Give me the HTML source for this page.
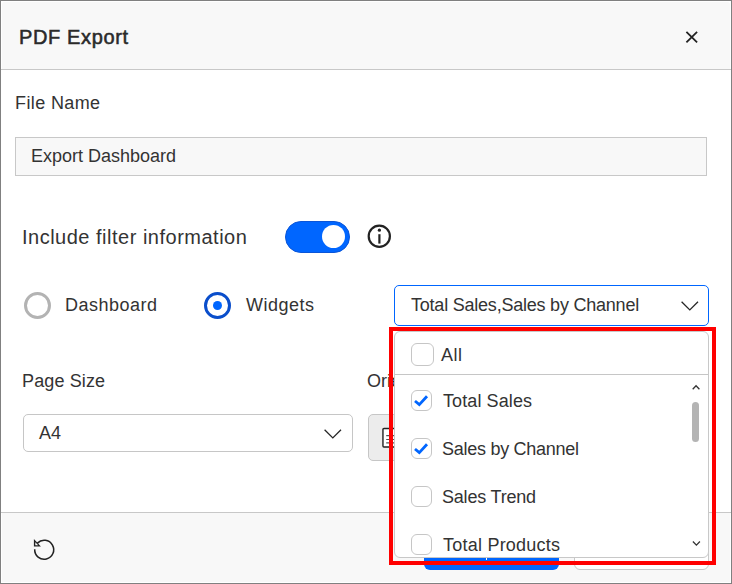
<!DOCTYPE html>
<html><head><meta charset="utf-8">
<style>
*{box-sizing:border-box;margin:0;padding:0}
html,body{width:732px;height:584px;overflow:hidden;background:#fff}
body{position:relative;font-family:"Liberation Sans",sans-serif;color:#333}
.abs{position:absolute}
.t{position:absolute;white-space:nowrap;line-height:1}
#frame{left:0;top:0;width:732px;height:584px;border:1px solid #808080}
#hdr{left:2px;top:2px;width:728px;height:67px;background:#f8f8f8;border-radius:2px 2px 0 0}
#hdrline{left:1px;top:69px;width:730px;height:1px;background:#c8c8c8}
#ftr{left:2px;top:513px;width:728px;height:69px;background:#f8f8f8}
#ftrline{left:1px;top:512px;width:730px;height:1px;background:#c8c8c8}
#title{left:19px;top:27px;font-size:20px;color:#2a2a2a;-webkit-text-stroke:.55px #2a2a2a;letter-spacing:.63px}
#fname{left:15px;top:94px;font-size:18px;letter-spacing:.38px}
#input{left:15px;top:137px;width:692px;height:39px;background:#f8f8f8;border:1px solid #c8c8c8}
#inputtxt{left:31px;top:147px;font-size:18px}
#incl{left:22px;top:227px;font-size:20px;letter-spacing:.5px}
#toggle{left:285px;top:221px;width:65px;height:32px;border-radius:16px;background:#0066ff;border:1px solid #0a55d8}
#knob{left:322px;top:225px;width:23px;height:23px;border-radius:50%;background:#fff}
#r1{left:24px;top:292px;width:27px;height:27px;border-radius:50%;border:3px solid #b3b3b3}
#r2{left:204px;top:292px;width:27px;height:27px;border-radius:50%;border:3px solid #0a4ecb}
#r2dot{left:213px;top:301px;width:9px;height:9px;border-radius:50%;background:#0066ff}
#dash{left:65px;top:296px;font-size:18px;letter-spacing:.5px}
#widg{left:246px;top:296px;font-size:18px;letter-spacing:.5px}
#dd{left:394px;top:285px;width:315px;height:41px;border:1px solid #0066ff;border-radius:5px;background:#fff}
#ddtxt{left:411px;top:296px;font-size:18px;letter-spacing:-.22px}
#psize{left:22px;top:372px;font-size:18px;letter-spacing:.12px}
#ori{left:367px;top:372px;font-size:18px}
#a4{left:23px;top:414px;width:330px;height:38px;border:1px solid #c6c6c6;border-radius:5px;background:#fff}
#a4txt{left:39px;top:424px;font-size:18px}
#orib{left:368px;top:414px;width:80px;height:47px;border:1px solid #c6c6c6;border-radius:5px;background:#ececec}
#btn1{left:424px;top:530px;width:135px;height:40px;border-radius:6px;background:#0066ff}
#btn2{left:574px;top:530px;width:135px;height:40px;border-radius:6px;background:#fff;border:1px solid #c8c8c8}
#pop{left:394px;top:331px;width:315px;height:227px;background:#fff;border:1px solid #c8c8c8;border-radius:6px;overflow:hidden}
#sep{left:395px;top:374px;width:313px;height:1px;background:#c6c6c6}
.cb{position:absolute;width:21px;height:21px;border:1.4px solid #c6c6c6;border-radius:6px;background:#fff}
.it{position:absolute;font-size:18px;line-height:1;white-space:nowrap}
#thumb{left:692px;top:402px;width:7px;height:40px;border-radius:4px;background:#b4b4b4}
#red{left:389px;top:327px;width:327px;height:238px;border:4px solid #ff0000}
</style></head><body>
<div id="frame" class="abs"></div>
<div id="hdr" class="abs"></div>
<div id="hdrline" class="abs"></div>
<div id="title" class="t">PDF Export</div>
<svg class="abs" style="left:684px;top:30px" width="15" height="14" viewBox="0 0 15 14"><path d="M2.4 1.8L13.1 12.3M13.1 1.8L2.4 12.3" stroke="#222" stroke-width="1.8" fill="none"/></svg>

<div id="fname" class="t">File Name</div>
<div id="input" class="abs"></div>
<div id="inputtxt" class="t">Export Dashboard</div>

<div id="incl" class="t">Include filter information</div>
<div id="toggle" class="abs"></div>
<div id="knob" class="abs"></div>
<svg class="abs" style="left:366px;top:223px" width="27" height="27" viewBox="0 0 27 27">
<circle cx="13.3" cy="13.3" r="10.6" stroke="#222" stroke-width="2.2" fill="none"/>
<circle cx="13.4" cy="7.2" r="1.6" fill="#222"/>
<path d="M13.4 11.2V20.6" stroke="#222" stroke-width="2.2"/>
</svg>

<div id="r1" class="abs"></div>
<div id="dash" class="t">Dashboard</div>
<div id="r2" class="abs"></div>
<div id="r2dot" class="abs"></div>
<div id="widg" class="t">Widgets</div>

<div id="dd" class="abs"></div>
<div id="ddtxt" class="t">Total Sales,Sales by Channel</div>
<svg class="abs" style="left:680px;top:300px" width="20" height="12" viewBox="0 0 20 12"><path d="M1.6 1.8L9.8 9.9L18 1.8" stroke="#262626" stroke-width="1.3" fill="none"/></svg>

<div id="psize" class="t">Page Size</div>
<div id="ori" class="t">Orientation</div>
<div id="a4" class="abs"></div>
<div id="a4txt" class="t">A4</div>
<svg class="abs" style="left:323px;top:428px" width="20" height="12" viewBox="0 0 20 12"><path d="M1.6 1.8L9.8 9.9L18 1.8" stroke="#262626" stroke-width="1.3" fill="none"/></svg>
<div id="orib" class="abs"></div>
<svg class="abs" style="left:380px;top:426px" width="20" height="24" viewBox="0 0 20 24"><rect x="2.95" y="2.45" width="14" height="18.5" rx="1" stroke="#222" stroke-width="1.4" fill="#fff"/><path d="M6.2 9.6h8M6.2 13.5h8M6.2 16.9h8" stroke="#555" stroke-width="1.2"/></svg>

<div id="ftrline" class="abs"></div>
<div id="ftr" class="abs"></div>
<svg class="abs" style="left:30px;top:535px" width="30" height="30" viewBox="0 0 30 30">
<path d="M4.7 14.3A9.5 9.5 0 1 0 7.4 8.1" stroke="#222" stroke-width="1.55" fill="none"/>
<path d="M3.9 4.1V11.6H10.9ZM5.3 7.2V10.2H8.2Z" fill="#222" fill-rule="evenodd"/>
</svg>
<div id="btn1" class="abs"></div>
<div id="btn2" class="abs"></div>
<div class="abs" style="left:486px;top:558px;width:1px;height:2px;background:#fff"></div>

<div id="pop" class="abs"></div>
<div id="sep" class="abs"></div>
<div class="cb" style="left:411px;top:343px;width:23px;height:23px"></div>
<div id="all" class="it" style="left:441px;top:346px;letter-spacing:.5px">All</div>
<div class="cb" style="left:411px;top:390px"></div>
<svg class="abs" style="left:411px;top:390px" width="21" height="21" viewBox="0 0 21 21"><path d="M4 11L8.3 14.6L16 6.2" stroke="#0066ff" stroke-width="2.8" fill="none"/></svg>
<div id="ts" class="it" style="left:443px;top:392px;letter-spacing:.1px">Total Sales</div>
<div class="cb" style="left:411px;top:438px"></div>
<svg class="abs" style="left:411px;top:438px" width="21" height="21" viewBox="0 0 21 21"><path d="M4 11L8.3 14.6L16 6.2" stroke="#0066ff" stroke-width="2.8" fill="none"/></svg>
<div id="sbc" class="it" style="left:442px;top:440px;letter-spacing:-.27px">Sales by Channel</div>
<div class="cb" style="left:411px;top:486px"></div>
<div id="st" class="it" style="left:442px;top:488px;letter-spacing:-.2px">Sales Trend</div>
<div class="cb" style="left:411px;top:534px"></div>
<div id="tp" class="it" style="left:443px;top:536px;letter-spacing:.23px">Total Products</div>
<svg class="abs" style="left:691px;top:383px" width="10" height="8" viewBox="0 0 10 8"><path d="M1.7 6.2L5.05 2.7L8.4 6.2" stroke="#333" stroke-width="1.3" fill="none"/></svg>
<div id="thumb" class="abs"></div>
<svg class="abs" style="left:691px;top:538px" width="10" height="10" viewBox="0 0 10 10"><path d="M1.9 3.5L5.4 7.1L8.9 3.5" stroke="#333" stroke-width="1.3" fill="none"/></svg>

<div id="red" class="abs"></div>
</body></html>
